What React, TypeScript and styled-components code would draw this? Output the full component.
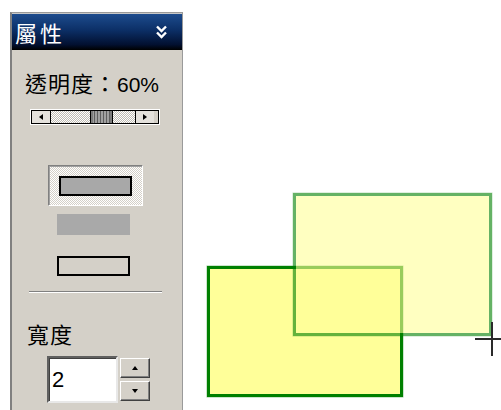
import React from 'react';
import styled, { createGlobalStyle } from 'styled-components';

const GlobalStyle = createGlobalStyle`
  html, body {
    margin: 0;
    padding: 0;
    background: #ffffff;
  }
  body {
    font-family: "Noto Sans CJK TC", "Noto Sans", sans-serif;
  }
`;

const Screen = styled.div`
  display: flex;
  flex-direction: row;
  align-items: flex-start;
  width: 501px;
  height: 410px;
  overflow: hidden;
`;

const Panel = styled.div`
  box-sizing: border-box;
  width: 173px;
  height: 398px;
  margin: 12px 0 0 10px;
  background: #d4d0c8;
  border: 1px solid #9a9a9a;
  border-left: 2px solid #808080;
  border-bottom: none;
  display: flex;
  flex-direction: column;
  align-items: center;
`;

const TitleBar = styled.div`
  box-sizing: border-box;
  align-self: stretch;
  height: 37px;
  border-top: 1px solid #c8c8c8;
  background: linear-gradient(#1d4c8e 0%, #0c2f66 45%, #021030 85%, #000 100%);
  display: flex;
  align-items: center;
  justify-content: space-between;
  padding: 0 15px 0 3px;
`;

const TitleText = styled.span`
  color: #ffffff;
  font-size: 22px;
  line-height: 22px;
  letter-spacing: 3px;
`;

const Label = styled.div<{ $top: number; $left: number }>`
  align-self: flex-start;
  margin: ${(p) => p.$top}px 0 0 ${(p) => p.$left}px;
  font-size: 22px;
  line-height: 22px;
  letter-spacing: 1px;
  color: #000;
  white-space: nowrap;
`;

const Digits = styled.span`
  font-family: "Liberation Sans", Arial, sans-serif;
  font-size: 21px;
  letter-spacing: 0;
`;

const Scrollbar = styled.div`
  box-sizing: border-box;
  width: 130px;
  height: 16px;
  margin: 13px 4px 0 0;
  border: 1px solid #ffffff;
  display: flex;
`;

const ScrollInner = styled.div`
  flex: 1;
  display: flex;
  border: 1px solid #000;
  background: #d4d0c8;
`;

const ArrowButton = styled.div<{ $side: 'left' | 'right' }>`
  width: 18px;
  display: flex;
  align-items: center;
  justify-content: center;
  background: #e4e1dc;
  ${(p) => (p.$side === 'left' ? 'border-right: 1px solid #000;' : 'border-left: 1px solid #000;')}
`;

const Track = styled.div<{ $w: number }>`
  width: ${(p) => p.$w}px;
  background: repeating-conic-gradient(#c0bcb4 0 25%, #ffffff 0 50%) 0 0 / 2px 2px;
`;

const Thumb = styled.div`
  width: 21px;
  border-left: 1px solid #000;
  border-right: 1px solid #000;
  background: repeating-linear-gradient(90deg, #5e5e5e 0 1px, #a0a0a0 1px 3px);
  box-shadow: inset 2px 0 #7c7c7c, inset -2px 0 #7c7c7c;
`;

const StyleOption = styled.div<{ $selected?: boolean }>`
  box-sizing: border-box;
  display: flex;
  align-items: center;
  justify-content: center;
  ${(p) =>
    p.$selected
      ? `
    width: 95px;
    height: 41px;
    border: 1px solid;
    border-color: #808080 #ffffff #ffffff #808080;
    box-shadow: inset 1px 1px #a0a0a0;
    background: repeating-conic-gradient(#d4d0c8 0 25%, #ffffff 0 50%) 0 0 / 2px 2px;
  `
      : ''}
`;

const Swatch = styled.div<{ $fill: string; $line: boolean; $top: number }>`
  box-sizing: border-box;
  width: 73px;
  height: ${(p) => (p.$line ? 20 : 21)}px;
  margin-top: ${(p) => p.$top}px;
  background: ${(p) => p.$fill};
  border: ${(p) => (p.$line ? '2px solid #000' : 'none')};
`;

const Separator = styled.div`
  width: 133px;
  height: 1px;
  margin: 15px 4px 0 0;
  background: #808080;
  border-bottom: 1px solid #ffffff;
`;

const SpinRow = styled.div`
  display: flex;
  align-items: flex-start;
  margin: 12px 0 0 35px;
  gap: 2px;
  align-self: flex-start;
`;

const SpinInput = styled.div`
  box-sizing: border-box;
  width: 71px;
  height: 47px;
  background: #ffffff;
  border: 2px solid;
  border-color: #606060 #e8e8e8 #e8e8e8 #606060;
  box-shadow: inset 1px 1px #404040;
  display: flex;
  align-items: center;
  padding-left: 3px;
  font-family: "Liberation Sans", Arial, sans-serif;
  font-size: 22px;
  color: #000;
`;

const SpinButtons = styled.div`
  display: flex;
  flex-direction: column;
  gap: 3px;
  padding-top: 2px;
`;

const SpinButton = styled.div`
  box-sizing: border-box;
  width: 30px;
  height: 20px;
  background: #d4d0c8;
  border: 1px solid;
  border-color: #ffffff #404040 #404040 #ffffff;
  box-shadow: inset -1px -1px #808080;
  display: flex;
  align-items: center;
  justify-content: center;
`;

const Canvas = styled.div`
  position: relative;
  flex: 1;
  height: 410px;
`;

const Shape = styled.div<{ $x: number; $y: number; $w: number; $h: number; $alpha: number }>`
  position: absolute;
  box-sizing: border-box;
  left: ${(p) => p.$x}px;
  top: ${(p) => p.$y}px;
  width: ${(p) => p.$w}px;
  height: ${(p) => p.$h}px;
  background: #ffff99;
  border: 3px solid #008000;
  box-shadow: 0 0 0 0.5px rgba(0, 128, 0, 0.4);
  opacity: ${(p) => p.$alpha};
`;

const Cursor = styled.svg`
  position: absolute;
  left: 292px;
  top: 322px;
`;

function Triangle({ dir }: { dir: 'left' | 'right' | 'up' | 'down' }) {
  const pts = {
    left: '4,0 0,3 4,6',
    right: '0,0 4,3 0,6',
    up: '0,4 3,0 6,4',
    down: '0,0 3,4 6,0',
  }[dir];
  const w = dir === 'left' || dir === 'right' ? 4 : 7;
  const h = dir === 'left' || dir === 'right' ? 7 : 4;
  return (
    <svg width={w} height={h} viewBox={`0 0 ${w} ${h}`}>
      <polygon points={pts} fill="#000" />
    </svg>
  );
}

function CollapseIcon() {
  return (
    <svg width="11" height="14" viewBox="0 0 11 14">
      <polyline points="1,1.5 5.5,6 10,1.5" fill="none" stroke="#fff" strokeWidth="2.4" />
      <polyline points="1,7.5 5.5,12 10,7.5" fill="none" stroke="#fff" strokeWidth="2.4" />
    </svg>
  );
}

export default function App() {
  return (
    <>
      <GlobalStyle />
      <Screen>
        <Panel>
          <TitleBar>
            <TitleText>屬性</TitleText>
            <CollapseIcon />
          </TitleBar>
          <Label $top={21} $left={13}>
            透明度：<Digits>60%</Digits>
          </Label>
          <Scrollbar>
            <ScrollInner>
              <ArrowButton $side="left"><Triangle dir="left" /></ArrowButton>
              <Track $w={39} />
              <Thumb />
              <Track $w={22} />
              <ArrowButton $side="right"><Triangle dir="right" /></ArrowButton>
            </ScrollInner>
          </Scrollbar>
          <StyleOption $selected style={{ marginTop: 40, marginRight: 4 }}>
            <Swatch $fill="#a8a8a8" $line $top={0} />
          </StyleOption>
          <Swatch $fill="#a9a9a9" $line={false} $top={8} style={{ marginRight: 8 }} />
          <Swatch $fill="transparent" $line $top={21} style={{ marginRight: 8 }} />
          <Separator />
          <Label $top={29} $left={15}>寬度</Label>
          <SpinRow>
            <SpinInput>2</SpinInput>
            <SpinButtons>
              <SpinButton><Triangle dir="up" /></SpinButton>
              <SpinButton><Triangle dir="down" /></SpinButton>
            </SpinButtons>
          </SpinRow>
        </Panel>
        <Canvas>
          <Shape $x={24} $y={266} $w={196} $h={131} $alpha={1} />
          <Shape $x={110} $y={193} $w={199} $h={143} $alpha={0.6} />
          <Cursor width="40" height="36" viewBox="0 0 40 36">
            <line x1="0" y1="17" x2="40" y2="17" stroke="#2a2a2a" strokeWidth="2" />
            <line x1="17" y1="0" x2="17" y2="34" stroke="#2a2a2a" strokeWidth="2" />
          </Cursor>
        </Canvas>
      </Screen>
    </>
  );
}
